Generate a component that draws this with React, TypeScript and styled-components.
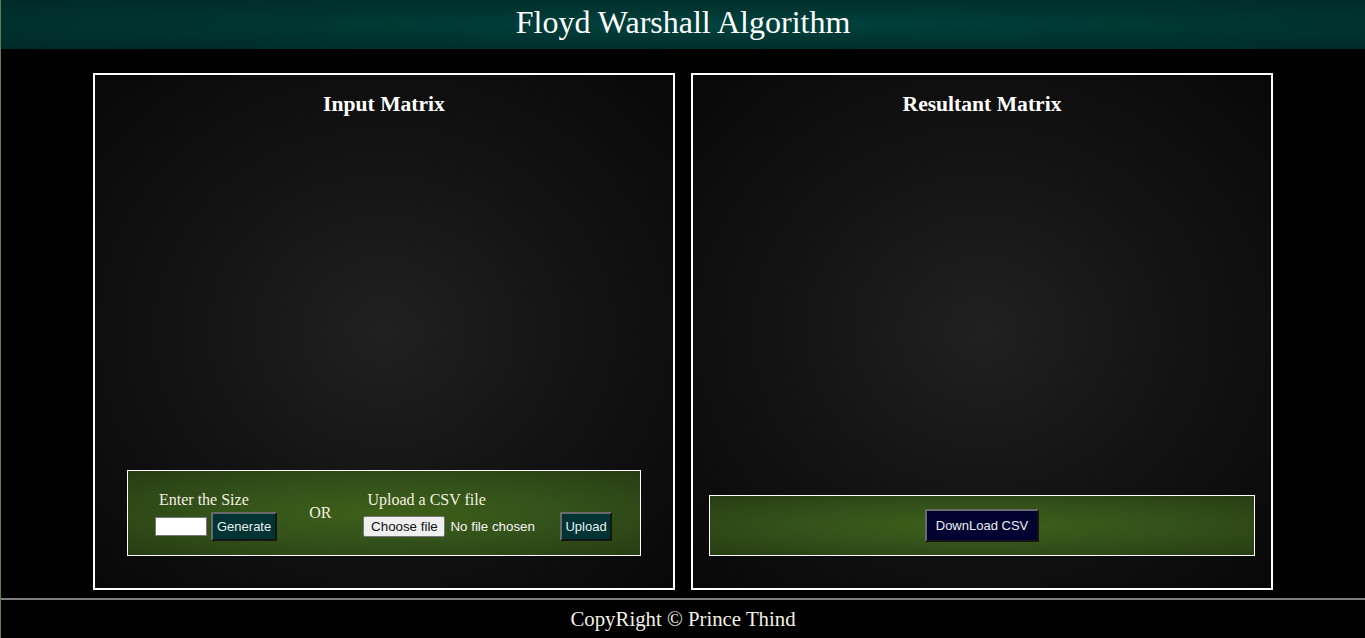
import React from "react";
import styled, { createGlobalStyle } from "styled-components";

const GlobalStyle = createGlobalStyle`
  html, body { margin: 0; padding: 0; background: #000; }
  body {
    font-family: "Liberation Serif", "Times New Roman", serif;
    color: #f4f1e4;
    border-left: 1px solid #5f7d50;
    min-height: 638px;
    box-sizing: border-box;
  }
  * { box-sizing: border-box; }
`;

const Page = styled.div`
  display: flex;
  flex-direction: column;
  min-height: 638px;
`;

const Header = styled.header`
  height: 49px;
  padding-bottom: 4px;
  display: flex;
  align-items: center;
  justify-content: center;
  background: radial-gradient(ellipse at 55% 50%, #00433e 0%, #003531 45%, #002a28 100%);
`;

const Title = styled.h1`
  margin: 0;
  font-family: "Liberation Serif", "Times New Roman", serif;
  font-weight: normal;
  font-size: 32px;
  line-height: 45px;
  color: #ffffff;
`;

const Main = styled.main`
  display: flex;
  justify-content: center;
  gap: 16px;
  padding-top: 24px;
  padding-bottom: 8px;
`;

const Panel = styled.section`
  width: 582px;
  height: 517px;
  border: 2px solid #ffffff;
  display: flex;
  flex-direction: column;
  align-items: center;
  justify-content: space-between;
  background: radial-gradient(ellipse at 50% 50%, #202020 0%, #141414 45%, #080808 100%);
`;

const PanelTitle = styled.h2`
  margin: 15px 0 0;
  font-family: "Liberation Serif", "Times New Roman", serif;
  font-weight: bold;
  font-size: 21.6px;
  line-height: 28px;
  color: #ffffff;
`;

const ControlBox = styled.div<{ $w: number; $h: number }>`
  width: ${(p) => p.$w}px;
  height: ${(p) => p.$h}px;
  margin-bottom: 32px;
  border: 1px solid #ffffff;
  display: flex;
  align-items: center;
  background: radial-gradient(ellipse at 50% 50%, #3e6019 0%, #33511a 50%, #283d12 100%);
`;

const InputControls = styled(ControlBox)`
  padding: 6px 0 0 27px;
  gap: 32px;
`;

const DownloadControls = styled(ControlBox)`
  justify-content: center;
`;

const Group = styled.div`
  display: flex;
  flex-direction: column;
  gap: 3px;
`;

const Label = styled.span`
  padding-left: 4px;
  font-size: 16px;
  line-height: 18px;
  color: #f4f1e0;
`;

const Row = styled.div`
  display: flex;
  align-items: center;
  gap: 4px;
`;

const SizeInput = styled.input`
  width: 52px;
  height: 19px;
  border: 1px solid #777;
  background: #fff;
  padding: 0;
`;

const Button = styled.button<{ $navy?: boolean; $pad?: string }>`
  font-family: "Liberation Sans", Arial, sans-serif;
  font-size: 13px;
  line-height: 15px;
  color: #e8f0f0;
  background: ${(p) => (p.$navy ? "#020230" : "#003333")};
  border: 2px outset #6a6a6a;
  padding: ${(p) => p.$pad || "4px 4px"};
  cursor: pointer;
`;

const Or = styled.span`
  font-size: 16px;
  line-height: 18px;
  margin-top: -6px;
  color: #f4f1e0;
`;

const FilePicker = styled.label`
  width: 193px;
  display: flex;
  align-items: center;
  gap: 5px;
  font-family: "Liberation Sans", Arial, sans-serif;
  font-size: 13.33px;
  color: #f4f4f4;
  cursor: pointer;
  input { display: none; }
`;

const FileButton = styled.span`
  width: 82px;
  height: 21px;
  display: inline-flex;
  align-items: center;
  justify-content: center;
  font-family: "Liberation Sans", Arial, sans-serif;
  font-size: 13.33px;
  color: #111;
  background: #efefef;
  border: 1px solid #767676;
  border-radius: 2px;
`;

const Footer = styled.footer`
  height: 40px;
  border-top: 2px solid #808080;
  display: flex;
  align-items: center;
  justify-content: center;
  font-size: 20.8px;
  color: #f4f1e4;
  background: #000;
`;

export default function App() {
  return (
    <>
      <GlobalStyle />
      <Page>
        <Header>
          <Title>Floyd Warshall Algorithm</Title>
        </Header>
        <Main>
          <Panel>
            <PanelTitle>Input Matrix</PanelTitle>
            <InputControls $w={514} $h={86}>
              <Group>
                <Label>Enter the Size</Label>
                <Row>
                  <SizeInput type="text" />
                  <Button $pad="5px 4px">Generate</Button>
                </Row>
              </Group>
              <Or>OR</Or>
              <Group>
                <Label>Upload a CSV file</Label>
                <Row>
                  <FilePicker>
                    <input type="file" accept=".csv" />
                    <FileButton>Choose file</FileButton>
                    <span>No file chosen</span>
                  </FilePicker>
                  <Button $pad="5px 3px">Upload</Button>
                </Row>
              </Group>
            </InputControls>
          </Panel>
          <Panel>
            <PanelTitle>Resultant Matrix</PanelTitle>
            <DownloadControls $w={546} $h={61}>
              <Button $navy $pad="7px 9px">DownLoad CSV</Button>
            </DownloadControls>
          </Panel>
        </Main>
        <Footer>CopyRight © Prince Thind</Footer>
      </Page>
    </>
  );
}
